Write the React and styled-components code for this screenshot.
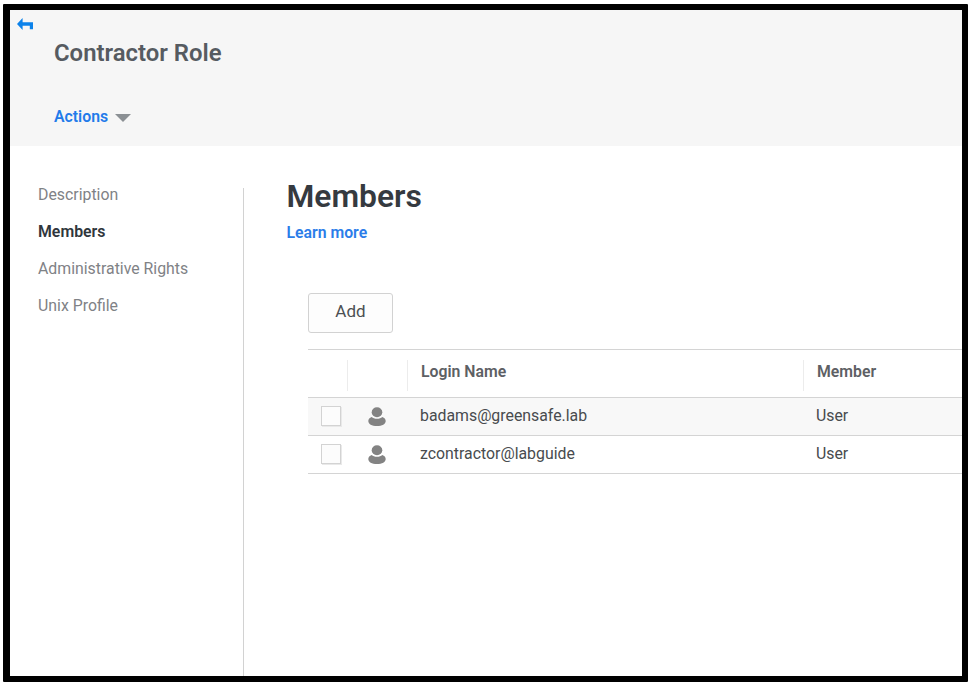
import React from "react";
import styled, { createGlobalStyle } from "styled-components";

const GlobalStyle = createGlobalStyle`
  * { box-sizing: border-box; }
  html, body { margin: 0; padding: 0; background: #fff; }
  body { font-family: Roboto, "Liberation Sans", sans-serif; overflow: hidden; }
`;

const Page = styled.div`
  width: 973px;
  height: 688px;
  padding: 4px 5px 6px 3px;
  background: #fff;
`;

const Frame = styled.div`
  display: flex;
  flex-direction: column;
  width: 965px;
  height: 678px;
  border: solid #000;
  border-width: 6px 6px 6px 7px;
  border-radius: 1px;
  overflow: hidden;
`;

const Header = styled.header`
  flex: none;
  height: 136px;
  padding: 7px 0 0 7px;
  background: #f6f6f6;
`;

const BackButton = styled.button`
  display: block;
  width: 17px;
  height: 14px;
  padding: 0;
  border: 0;
  background: none;
  svg { display: block; }
`;

const Title = styled.h1`
  margin: 8px 0 0 37px;
  font-size: 23.9px;
  line-height: 28px;
  font-weight: 600;
  color: #565b61;
`;

const ActionsMenu = styled.button`
  display: flex;
  align-items: center;
  gap: 7px;
  margin: 40px 0 0 37px;
  padding: 0;
  border: 0;
  background: none;
  font: 600 15.8px/20px Roboto, sans-serif;
  color: #1f7bea;
  svg { display: block; margin-top: 2px; }
`;

const Body = styled.div`
  display: flex;
  flex: 1;
  min-height: 0;
  padding-top: 42px;
`;

const SideNav = styled.nav`
  display: flex;
  flex-direction: column;
  flex: none;
  width: 234px;
  padding-left: 28px;
  border-right: 1px solid #d2d2d2;
`;

const NavItem = styled.a`
  height: 37px;
  margin-top: ${(p) => (p.$first ? "-12px" : "0")};
  font-size: 15.85px;
  line-height: 37px;
  font-weight: ${(p) => (p.$active ? 600 : 400)};
  color: ${(p) => (p.$active ? "#30363c" : "#7f8286")};
  white-space: nowrap;
`;

const Content = styled.main`
  flex: 1;
  min-width: 0;
  padding-left: 42.5px;
`;

const SectionTitle = styled.h2`
  margin: -12px 0 0;
  font-size: 31.8px;
  line-height: 40px;
  font-weight: 600;
  color: #353a40;
`;

const LearnMore = styled.a`
  display: block;
  margin-top: 7px;
  font-size: 15.8px;
  line-height: 20px;
  font-weight: 600;
  color: #2b7de9;
`;

const AddButton = styled.button`
  display: block;
  width: 85px;
  height: 40px;
  margin: 50px 0 0 21.5px;
  padding: 0 0 4px;
  border: 1px solid #d2d2d2;
  border-radius: 3px;
  background: #fdfdfd;
  font: 400 17px/34px Roboto, sans-serif;
  color: #4c5053;
`;

const Table = styled.div`
  margin: 16px 0 0 21.5px;
  border-top: 1px solid #d4d4d4;
`;

const Row = styled.div`
  display: grid;
  grid-template-columns: 40px 60px 396px 1fr;
  align-items: center;
  height: ${(p) => (p.$head ? "48px" : "38px")};
  border-bottom: 1px solid #d4d4d4;
  background: ${(p) => (p.$shaded ? "#f8f8f8" : "#fff")};
`;

const HeadCell = styled.div`
  height: 31px;
  padding: 0 0 0 13px;
  margin-top: 3px;
  border-right: ${(p) => (p.$last ? "0" : "1px solid #ececec")};
  font-size: 15.8px;
  line-height: 24px;
  font-weight: 600;
  color: #5d6064;
`;

const Cell = styled.div`
  padding: 0 0 1px 12px;
  font-size: 15.85px;
  line-height: 20px;
  color: #484b4e;
`;

const IconCell = styled.div`
  padding: 0 0 0 20px;
  svg { display: block; }
`;

const Checkbox = styled.span`
  display: block;
  width: 20px;
  height: 20px;
  margin: 0 0 2px 13px;
  border: 1px solid #d3d3d3;
  box-shadow: 1px 1px 0 #e9e9e9;
  background: #fcfcfc;
`;

const BackIcon = () => (
  <svg width="17" height="14" viewBox="0 0 17 14">
    <path d="M0 7 L5.6 1 V5.2 H16 V12.2 H12.8 V8.8 H5.6 V13 Z" fill="#0c82ea" />
  </svg>
);

const CaretIcon = () => (
  <svg width="16" height="8" viewBox="0 0 16 8">
    <path d="M0 0 H16 L8 8 Z" fill="#8b9094" />
  </svg>
);

const UserIcon = () => (
  <svg width="18" height="20" viewBox="0 0 18 20">
    <ellipse cx="9" cy="5.2" rx="5.3" ry="5" fill="#838383" />
    <path d="M3.7 9.9 C4.9 11.1 6.8 11.7 9 11.7 S13.1 11.1 14.3 9.9 C16.4 10.6 17.7 12.1 17.7 13.9 C17.7 16.9 14.2 19.1 9 19.1 S.3 16.9 .3 13.9 C.3 12.1 1.6 10.6 3.7 9.9 Z" fill="#838383" />
  </svg>
);

const navItems = ["Description", "Members", "Administrative Rights", "Unix Profile"];
const members = [
  { login: "badams@greensafe.lab", type: "User" },
  { login: "zcontractor@labguide", type: "User" },
];

export default function App() {
  return (
    <>
      <GlobalStyle />
      <Page>
        <Frame>
          <Header>
            <BackButton aria-label="Back"><BackIcon /></BackButton>
            <Title>Contractor Role</Title>
            <ActionsMenu>Actions<CaretIcon /></ActionsMenu>
          </Header>
          <Body>
            <SideNav>
              {navItems.map((item, i) => (
                <NavItem key={item} $first={i === 0} $active={item === "Members"}>{item}</NavItem>
              ))}
            </SideNav>
            <Content>
              <SectionTitle>Members</SectionTitle>
              <LearnMore>Learn more</LearnMore>
              <AddButton>Add</AddButton>
              <Table>
                <Row $head>
                  <HeadCell />
                  <HeadCell />
                  <HeadCell>Login Name</HeadCell>
                  <HeadCell $last>Member</HeadCell>
                </Row>
                {members.map((m, i) => (
                  <Row key={m.login} $shaded={i % 2 === 0}>
                    <Checkbox />
                    <IconCell><UserIcon /></IconCell>
                    <Cell>{m.login}</Cell>
                    <Cell>{m.type}</Cell>
                  </Row>
                ))}
              </Table>
            </Content>
          </Body>
        </Frame>
      </Page>
    </>
  );
}
